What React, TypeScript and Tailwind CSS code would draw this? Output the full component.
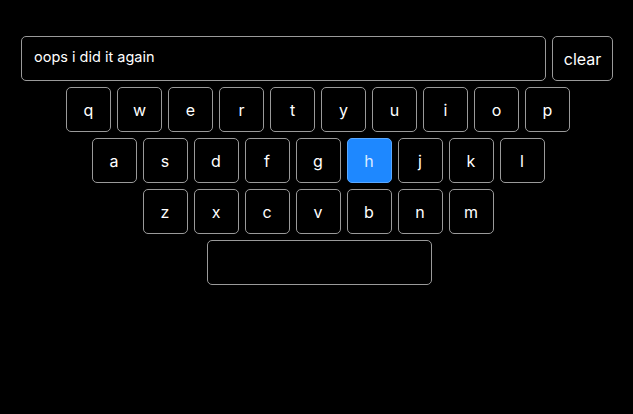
import React from "react";

const rows = [
  ["q", "w", "e", "r", "t", "y", "u", "i", "o", "p"],
  ["a", "s", "d", "f", "g", "h", "j", "k", "l"],
  ["z", "x", "c", "v", "b", "n", "m"],
];

export default function App() {
  return (
    <div
      className="min-h-screen w-full bg-black text-white"
      style={{ fontFamily: "Inter, 'Noto Sans', sans-serif" }}
    >
      <div className="pt-[36px] pl-[21px] pr-[20px]">
        <div className="flex gap-[6px] h-[45px]">
          <div className="flex-1 flex items-center border border-[#9a9a9a] rounded-[5px] px-[12px] pb-[3px] text-[14.5px]">
            oops i did it again
          </div>
          <button className="w-[61px] h-[45px] border border-[#9a9a9a] rounded-[5px] text-[16px] flex items-center justify-center">
            clear
          </button>
        </div>
      </div>
      <div className="mt-[6px] pl-[3px] flex flex-col items-center gap-[6px]">
        {rows.map((row, i) => (
          <div key={i} className="flex gap-[6px]">
            {row.map((k) => (
              <div
                key={k}
                className={
                  k === "h"
                    ? "w-[45px] h-[45px] rounded-[5px] border border-[#5aa8ff] bg-[#1e88ff] text-[#dcecff] flex items-center justify-center text-[16px]"
                    : "w-[45px] h-[45px] rounded-[5px] border border-[#9a9a9a] flex items-center justify-center text-[16px]"
                }
              >
                {k}
              </div>
            ))}
          </div>
        ))}
        <div className="w-[225px] h-[45px] rounded-[5px] border border-[#9a9a9a] ml-[2px]" />
      </div>
    </div>
  );
}
